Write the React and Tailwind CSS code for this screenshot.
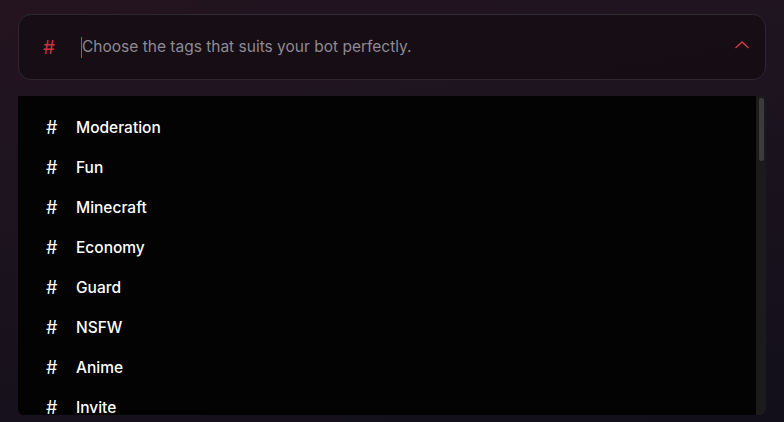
const tags = ["Moderation", "Fun", "Minecraft", "Economy", "Guard", "NSFW", "Anime", "Invite"];

export default function App() {
  return (
    <div
      className="w-[784px] h-[422px] overflow-hidden bg-[linear-gradient(170deg,#24141f_0%,#1d1420_35%,#120f1a_100%)] px-[18px] pt-[14px]"
      style={{ fontFamily: "Inter, 'Noto Sans', sans-serif" }}
    >
      {/* search field */}
      <div className="flex h-[66px] items-center rounded-[13px] border border-[#2d2730] bg-[#160c13]/90 pl-[24px] pr-[15px]">
        <span className="w-[38px] text-[19px] text-[#c5363f] leading-none">#</span>
        <div className="flex flex-1 items-center">
          <span className="h-[21px] w-px bg-[#d0424a]" />
          <span className="text-[15.5px] text-[#8c8a93]">Choose the tags that suits your bot perfectly.</span>
        </div>
        <svg width="16" height="10" viewBox="0 0 16 10" className="mt-[-4px]">
          <path d="M1.5 8 L8 2 L14.5 8" fill="none" stroke="#d43a44" strokeWidth="1.4" />
        </svg>
      </div>

      {/* dropdown list */}
      <div className="mt-[16px] flex h-[319px] overflow-hidden rounded-b-[6px] bg-[#030303]">
        <ul className="flex-1 pt-[12px]">
          {tags.map((t) => (
            <li key={t} className="flex h-10 items-center pl-[28px] text-white">
              <span className="w-[30px] text-[18px] leading-none">#</span>
              <span className="text-[15.5px] font-medium">{t}</span>
            </li>
          ))}
        </ul>
        <div className="w-[10px] bg-[#1b1b1b] pt-[2px] flex justify-center">
          <div className="h-[63px] w-[5px] rounded-full bg-[#3c3c3c]" />
        </div>
      </div>
    </div>
  );
}
